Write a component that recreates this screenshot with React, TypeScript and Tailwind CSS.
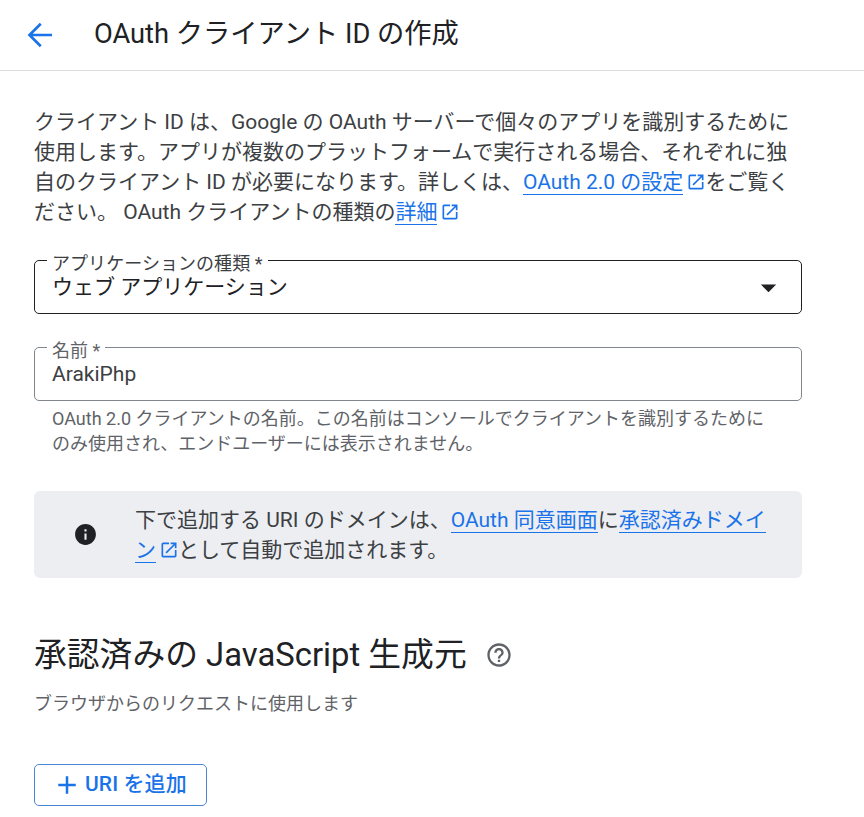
const FONT = "font-['Roboto','Noto_Sans_CJK_JP',sans-serif]"

function OpenInNew({ className = '' }: { className?: string }) {
  return (
    <svg viewBox="0 0 24 24" className={`inline-block w-[20px] h-[20px] fill-[#1a73e8] align-[-3px] ${className}`}>
      <path d="M19 19H5V5h7V3H5c-1.11 0-2 .9-2 2v14c0 1.1.89 2 2 2h14c1.1 0 2-.9 2-2v-7h-2v7zM14 3v2h3.59l-9.83 9.83 1.41 1.41L19 6.41V10h2V3h-7z" />
    </svg>
  )
}

function A({ children }: { children: React.ReactNode }) {
  return <a className="text-[#1a73e8] border-b border-[#1a73e8]">{children}</a>
}

export default function App() {
  return (
    <div className={`${FONT} w-[864px] h-[817px] overflow-hidden bg-white text-[#202124]`}>
      <header className="h-[71px] flex items-center border-b border-[#dadce0]">
        <button className="ml-[22px] w-[36px] h-[36px] flex items-center justify-center">
          <svg viewBox="0 0 24 24" className="w-[36px] h-[36px] fill-none stroke-[#1a73e8] stroke-[1.8]">
            <path d="M20 12H5M12.5 4.5 5 12l7.5 7.5" />
          </svg>
        </button>
        <h1 className="ml-[36px] mb-[2px] text-[27.25px] leading-[36px] font-normal">OAuth クライアント ID の作成</h1>
      </header>

      <main className="pl-[34px] w-[802px]">
        <p className="mt-[36px] text-[21px] leading-[30px] text-[#3c4043] whitespace-nowrap">
          クライアント ID は、Google の OAuth サーバーで個々のアプリを識別するために
          <br />
          使用します。アプリが複数のプラットフォームで実行される場合、それぞれに独
          <br />
          自のクライアント ID が必要になります。詳しくは、<A>OAuth 2.0 の設定</A>
          <OpenInNew className="ml-[3px] -mr-[1px]" />をご覧く
          <br />
          ださい。 OAuth クライアントの種類の<A>詳細</A>
          <OpenInNew className="ml-[3px]" />
        </p>

        <div className="relative mt-[33px] h-[54px] rounded-[5px] border border-[#202124] flex items-center pl-[17px] pr-[14px]">
          <span className="absolute -top-[6px] left-[12px] bg-white px-[5px] h-[16px] text-[18px] leading-[18px] text-[#3c4043] tracking-[0.05px]">アプリケーションの種類 *</span>
          <span className="flex-1 text-[21px] leading-[30px]">ウェブ アプリケーション</span>
          <svg viewBox="0 0 24 24" className="w-[37px] h-[37px] fill-[#202124]">
            <path d="M7 10l5 5 5-5z" />
          </svg>
        </div>

        <div className="relative mt-[33px] h-[54px] rounded-[5px] border border-[#80868b] flex items-center pl-[17px]">
          <span className="absolute -top-[6px] left-[12px] bg-white px-[5px] h-[16px] text-[18px] leading-[18px] text-[#5f6368]">名前 *</span>
          <span className="text-[21px] leading-[30px] text-[#3c4043]">ArakiPhp</span>
        </div>
        <p className="mt-[5px] pl-[18px] text-[18px] leading-[25px] text-[#5f6368] whitespace-nowrap">
          OAuth 2.0 クライアントの名前。この名前はコンソールでクライアントを識別するために
          <br />
          のみ使用され、エンドユーザーには表示されません。
        </p>

        <div className="mt-[35px] h-[87px] rounded-[6px] bg-[#edeef2] flex items-center pl-[39px]">
          <svg viewBox="0 0 24 24" className="w-[25px] h-[25px] fill-[#202124] shrink-0">
            <path d="M12 2C6.48 2 2 6.48 2 12s4.48 10 10 10 10-4.48 10-10S17.52 2 12 2zm1 15h-2v-6h2v6zm0-8h-2V7h2v2z" />
          </svg>
          <p className="ml-[37px] text-[21px] leading-[30px] text-[#3c4043] whitespace-nowrap">
            下で追加する URI のドメインは、<A>OAuth 同意画面</A>に<A>承認済みドメイ<br />ン</A>
            <OpenInNew className="ml-[3px] -mr-[1px]" />として自動で追加されます。
          </p>
        </div>

        <div className="mt-[55px] flex items-center">
          <h2 className="text-[32.8px] leading-[44px] font-normal">承認済みの JavaScript 生成元</h2>
          <svg viewBox="0 0 24 24" className="ml-[18px] w-[28px] h-[28px] fill-[#5f6368]">
            <path d="M11 18h2v-2h-2v2zm1-16C6.48 2 2 6.48 2 12s4.48 10 10 10 10-4.48 10-10S17.52 2 12 2zm0 18c-4.41 0-8-3.59-8-8s3.59-8 8-8 8 3.59 8 8-3.59 8-8 8zm0-14c-2.21 0-4 1.79-4 4h2c0-1.1.9-2 2-2s2 .9 2 2c0 2-3 1.75-3 5h2c0-2.25 3-2.5 3-5 0-2.21-1.79-4-4-4z" />
          </svg>
        </div>
        <p className="mt-[14px] text-[18px] leading-[25px] text-[#5f6368]">ブラウザからのリクエストに使用します</p>

        <button className="mt-[48px] w-[173px] h-[42px] rounded-[5px] border border-[#4a86d8] flex items-center pl-[17px] text-[#1a73e8] text-[21px] font-medium tracking-[0.1px]">
          <svg viewBox="0 0 24 24" className="w-[30px] h-[30px] fill-[#1a73e8] mr-[3px] shrink-0">
            <path d="M19 13h-6v6h-2v-6H5v-2h6V5h2v6h6v2z" />
          </svg>
          URI を追加
        </button>
      </main>
    </div>
  )
}
